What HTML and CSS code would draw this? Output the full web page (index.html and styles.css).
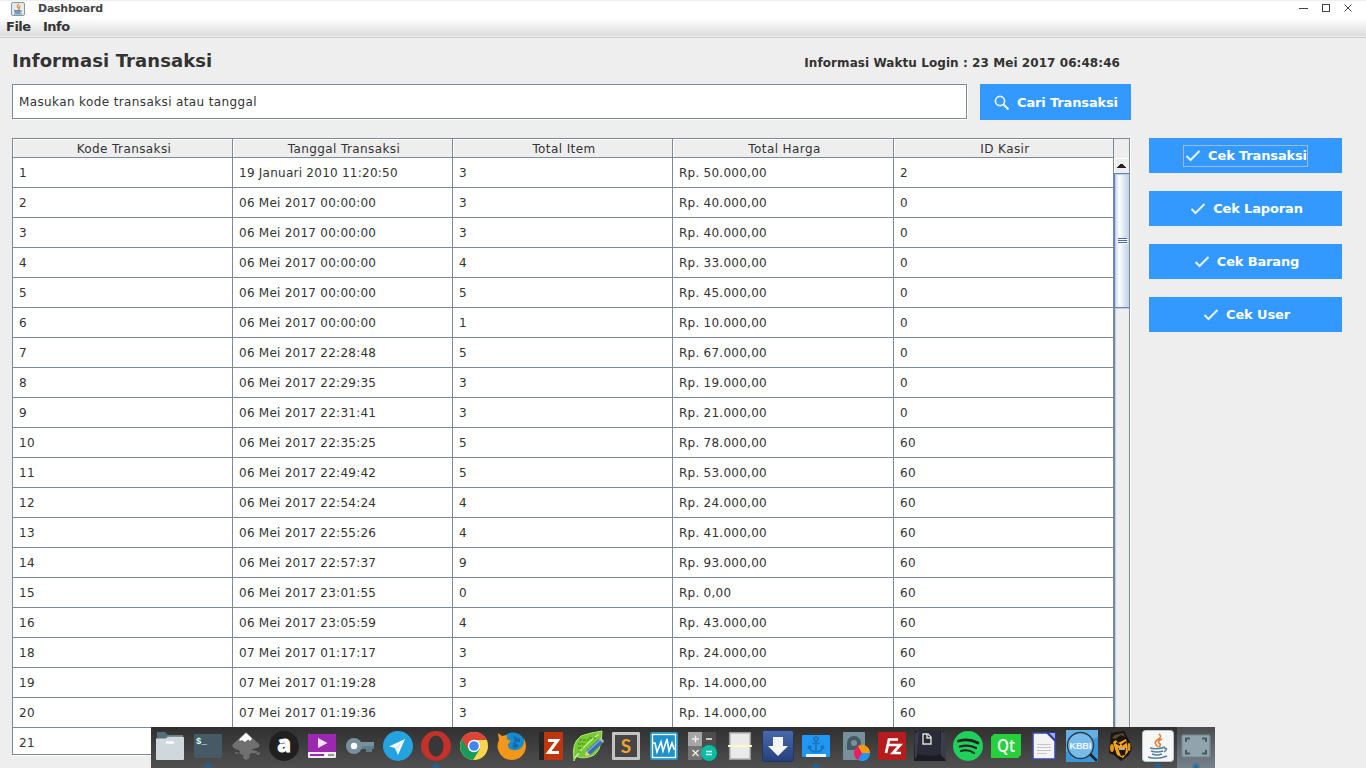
FILE: index.html
```html
<!DOCTYPE html>
<html lang="id">
<head>
<meta charset="utf-8">
<title>Dashboard</title>
<link rel="stylesheet" href="styles.css">
</head>
<body>
<header class="titlebar">
  <svg class="app-icon" width="14" height="14" viewBox="0 0 14 14"><rect x=".5" y=".5" width="13" height="13" rx="1.5" fill="#e4eaee" stroke="#8499a8"/><path d="M8 2Q5 4 7 5.5T7 8M9.500 4Q7.500 5 8.500 7" fill="none" stroke="#ed8b32" stroke-width="1.3"/><path d="M3.500 8.500H9V11H4.500ZM9 9H11M3 12H11" fill="#7aa0b8" stroke="#6489a4"/></svg>
  <span class="window-title">Dashboard</span>
  <svg class="window-controls" width="58" height="14" viewBox="0 0 58 14" fill="none" stroke="#444"><path d="M0 7.500H9"/><rect x="23.500" y="3.500" width="7" height="7"/><path d="M45.500 3.500L52.500 10.500M52.500 3.500L45.500 10.500"/></svg>
</header>
<nav class="menubar"><span class="m-file">File</span><span class="m-info">Info</span></nav>
<main class="content">
  <section class="main-col">
    <div class="heading"><h1>Informasi Transaksi</h1><span class="login">Informasi Waktu Login : 23 Mei 2017 06:48:46</span></div>
    <div class="search">
      <div class="field"><span>Masukan kode transaksi atau tanggal</span></div>
      <div class="btn search-btn"><svg width="16" height="16" viewBox="0 0 16 16" fill="none" stroke="#e9f4ff" stroke-width="1.7"><circle cx="6" cy="6" r="4.6"/><path d="M9.500 9.500L14.500 14.500" stroke-width="2.1"/></svg><span>Cari Transaksi</span></div>
    </div>
    <div class="pane">
      <div class="grid">
        <div class="row head"><span>Kode Transaksi</span><span>Tanggal Transaksi</span><span>Total Item</span><span>Total Harga</span><span>ID Kasir</span></div>
        <div class="row"><span>1</span><span>19 Januari 2010 11:20:50</span><span>3</span><span>Rp. 50.000,00</span><span>2</span></div>
        <div class="row"><span>2</span><span>06 Mei 2017 00:00:00</span><span>3</span><span>Rp. 40.000,00</span><span>0</span></div>
        <div class="row"><span>3</span><span>06 Mei 2017 00:00:00</span><span>3</span><span>Rp. 40.000,00</span><span>0</span></div>
        <div class="row"><span>4</span><span>06 Mei 2017 00:00:00</span><span>4</span><span>Rp. 33.000,00</span><span>0</span></div>
        <div class="row"><span>5</span><span>06 Mei 2017 00:00:00</span><span>5</span><span>Rp. 45.000,00</span><span>0</span></div>
        <div class="row"><span>6</span><span>06 Mei 2017 00:00:00</span><span>1</span><span>Rp. 10.000,00</span><span>0</span></div>
        <div class="row"><span>7</span><span>06 Mei 2017 22:28:48</span><span>5</span><span>Rp. 67.000,00</span><span>0</span></div>
        <div class="row"><span>8</span><span>06 Mei 2017 22:29:35</span><span>3</span><span>Rp. 19.000,00</span><span>0</span></div>
        <div class="row"><span>9</span><span>06 Mei 2017 22:31:41</span><span>3</span><span>Rp. 21.000,00</span><span>0</span></div>
        <div class="row"><span>10</span><span>06 Mei 2017 22:35:25</span><span>5</span><span>Rp. 78.000,00</span><span>60</span></div>
        <div class="row"><span>11</span><span>06 Mei 2017 22:49:42</span><span>5</span><span>Rp. 53.000,00</span><span>60</span></div>
        <div class="row"><span>12</span><span>06 Mei 2017 22:54:24</span><span>4</span><span>Rp. 24.000,00</span><span>60</span></div>
        <div class="row"><span>13</span><span>06 Mei 2017 22:55:26</span><span>4</span><span>Rp. 41.000,00</span><span>60</span></div>
        <div class="row"><span>14</span><span>06 Mei 2017 22:57:37</span><span>9</span><span>Rp. 93.000,00</span><span>60</span></div>
        <div class="row"><span>15</span><span>06 Mei 2017 23:01:55</span><span>0</span><span>Rp. 0,00</span><span>60</span></div>
        <div class="row"><span>16</span><span>06 Mei 2017 23:05:59</span><span>4</span><span>Rp. 43.000,00</span><span>60</span></div>
        <div class="row"><span>18</span><span>07 Mei 2017 01:17:17</span><span>3</span><span>Rp. 24.000,00</span><span>60</span></div>
        <div class="row"><span>19</span><span>07 Mei 2017 01:19:28</span><span>3</span><span>Rp. 14.000,00</span><span>60</span></div>
        <div class="row"><span>20</span><span>07 Mei 2017 01:19:36</span><span>3</span><span>Rp. 14.000,00</span><span>60</span></div>
        <div class="row"><span>21</span><span></span><span></span><span></span><span></span></div>
      </div>
      <div class="scroll">
        <div class="corner"></div>
        <div class="up"><svg width="15" height="14" viewBox="0 0 15 14" shape-rendering="crispEdges"><path d="M2 9V8H3V7H4V6H5V5H8V6H9V7H10V8H11V9Z" fill="#222"/></svg></div>
        <div class="thumb"><i></i><i></i><i></i></div>
        <div class="track"></div>
      </div>
    </div>
  </section>
  <aside class="actions">
    <div class="btn"><div class="label focus"><svg width="16" height="14" viewBox="0 0 16 14"><path d="M1.500 7L5.500 11L14.500 2" fill="none" stroke="#e6f3ff" stroke-width="2"/></svg><span>Cek Transaksi</span></div></div>
    <div class="btn"><div class="label"><svg width="16" height="14" viewBox="0 0 16 14"><path d="M1.500 7L5.500 11L14.500 2" fill="none" stroke="#e6f3ff" stroke-width="2"/></svg><span>Cek Laporan</span></div></div>
    <div class="btn"><div class="label"><svg width="16" height="14" viewBox="0 0 16 14"><path d="M1.500 7L5.500 11L14.500 2" fill="none" stroke="#e6f3ff" stroke-width="2"/></svg><span>Cek Barang</span></div></div>
    <div class="btn"><div class="label"><svg width="16" height="14" viewBox="0 0 16 14"><path d="M1.500 7L5.500 11L14.500 2" fill="none" stroke="#e6f3ff" stroke-width="2"/></svg><span>Cek User</span></div></div>
  </aside>
</main>
<footer class="dock">
  <!-- files -->
  <svg viewBox="0 0 38 41"><path d="M6 5H14L17 8H32V16H6Z" fill="#546e7a"/><path d="M17 8.500H32V12H14Z" fill="#78909c"/><path d="M5 11.500H15L17 10H33V32Q33 33 32 33H6Q5 33 5 32Z" fill="#cfd8dc"/><path d="M15 15.500H23" stroke="#fff" stroke-width="2.4"/></svg>
  <!-- terminal -->
  <svg class="running" viewBox="0 0 38 41"><rect x="5" y="7" width="28" height="24" rx="1" fill="#455a64"/><text x="7" y="17" font-family="Liberation Mono" font-size="9" font-weight="bold" fill="#dff">$_</text></svg>
  <!-- inkscape -->
  <svg viewBox="0 0 38 41"><path d="M19 5L32 17Q34 20 30 21Q24 22 25 23Q29 23 31 25Q28 27 24 26L22 29Q24 31 19 33Q14 31 17 29L12 26Q15 24 9 22Q4 20 6 17Z" fill="#707070"/><path d="M19 6L25 11.500L23 14L21 12.500L18 15L15 13L12.500 14V12Z" fill="#fff"/><path d="M8 25L12 26L9 27ZM28 27L33 25L32 28Z" fill="#777"/></svg>
  <!-- a -->
  <svg viewBox="0 0 38 41"><circle cx="19" cy="19" r="15" fill="#202020"/><text x="19" y="25" text-anchor="middle" font-family="Open Sans" font-size="22" font-weight="800" fill="#fff" stroke="#fff" stroke-width=".8">a</text></svg>
  <!-- video -->
  <svg viewBox="0 0 38 41"><rect x="5" y="7" width="28" height="24" rx="1" fill="#eee"/><path d="M5 8Q5 7 6 7H32Q33 7 33 8V25H5Z" fill="#9c27b0"/><path d="M15 11L24.500 16L15 21Z" fill="#f3e5f5"/><path d="M7 28H22" stroke="#9c27b0" stroke-width="2"/><path d="M25 28H31" stroke="#999" stroke-width="2"/><circle cx="23" cy="28" r="2" fill="#fff"/></svg>
  <!-- key -->
  <svg viewBox="0 0 38 41"><path d="M20 15H33V22H31V25H25V22H20Z" fill="#607d8b"/><path d="M20 15H33V19H20Z" fill="#78909c"/><circle cx="13" cy="19" r="8" fill="#78909c"/><circle cx="13" cy="19" r="3.200" fill="#fff"/></svg>
  <!-- telegram -->
  <svg viewBox="0 0 38 41"><circle cx="19" cy="19" r="15" fill="#25a2e0"/><path d="M26 12L10 19.500L16 21L19 28Z" fill="#fff"/><path d="M26 12L16 21L17 24Z" fill="#d8eaf5"/></svg>
  <!-- opera -->
  <svg class="running" viewBox="0 0 38 41"><circle cx="19" cy="19" r="15" fill="#c4312b"/><ellipse cx="19" cy="19" rx="7.500" ry="10.500" fill="#383838"/></svg>
  <!-- chrome -->
  <svg viewBox="0 0 38 41"><circle cx="19" cy="19" r="14" fill="#ffd54f"/><path d="M19 19L7 12A14 14 0 0 0 18 33L25 22Z" fill="#129d5a"/><path d="M19 19L12.500 22L6.700 12.200A14 14 0 0 1 31.500 13H19Z" fill="#db4437"/><circle cx="19" cy="19" r="6.200" fill="#fff"/><circle cx="19" cy="19" r="4.800" fill="#4285f4"/></svg>
  <!-- firefox -->
  <svg viewBox="0 0 38 41"><circle cx="20" cy="17.500" r="12" fill="#168bd0"/><path d="M5 6L9 9L14 8L14 12L18 14L15 17Q14 22 20 23Q24 24 28 21Q32 17 31 11Q35 20 31 26Q27 33 19 33Q10 33 6 25Q3 19 6 13Z" fill="#f39718"/><path d="M20 9L27 12V15L22 15L26 19L21 22Q18 18 22 14Z" fill="#1369ad"/></svg>
  <!-- zotero -->
  <svg viewBox="0 0 38 41"><rect x="8" y="5" width="24" height="28" rx="1" fill="#252525"/><rect x="13" y="5" width="19" height="28" fill="#bf360c"/><path d="M17 13.500H26.500L17.500 25.500H28" fill="none" stroke="#fff" stroke-width="3"/></svg>
  <!-- leaf editor -->
  <svg viewBox="0 0 38 41"><path d="M5 33Q2 16 12 9Q20 6 33 4Q33 28 20 30Q12 32 7 29L5 34Z" fill="#75c932" stroke="#b5e77b"/><path d="M6 31Q15 18 30 7" fill="none" stroke="#c5f08f" stroke-width="1.500"/><path d="M10 13H20M9 17H17M9 21H14M9 25H12M20 11H28M21 26H23" stroke="#3e8a1c" stroke-width="1.200" stroke-dasharray="3 1"/><path d="M17 24L30 12L34 16L21 28Z" fill="#3c6eb4"/><path d="M18 25L31 13" stroke="#85abe0" stroke-width="1.300"/><path d="M17 24L21 28L16 29Z" fill="#f0c68c"/><path d="M30 12L32 11L35 14L34 16Z" fill="#bbb"/></svg>
  <!-- sublime -->
  <svg viewBox="0 0 38 41"><rect x="5" y="5" width="28" height="28" rx="1" fill="#c4c4c4"/><rect x="8" y="8" width="22" height="22" fill="#464646"/><text x="19" y="26" text-anchor="middle" font-family="Lato" font-size="19" font-weight="bold" fill="#f5a132">S</text></svg>
  <!-- monitor -->
  <svg viewBox="0 0 38 41"><rect x="5" y="5" width="28" height="28" rx="2" fill="#2597cf"/><rect x="7.500" y="7.500" width="23" height="23" fill="#1e92ca" stroke="#fff" stroke-width="1.300"/><path d="M8 16H10L12 25L16 15L18 24L22 12L24 24L27 16L29 22H31" fill="none" stroke="#fff" stroke-width="1.600"/></svg>
  <!-- calculator -->
  <svg viewBox="0 0 38 41"><rect x="5" y="5" width="28" height="28" rx="1" fill="#4d4d4d"/><path d="M5 5H19V19H5Z" fill="#a5a5a5"/><path d="M5 19H19V33H5Z" fill="#747474"/><path d="M9 12H16M12.500 8.500V15.500M23 12H29M9.500 23L15.500 29M15.500 23L9.500 29" stroke="#eee" stroke-width="1.400"/><circle cx="26" cy="26" r="8" fill="#00bfa5"/><path d="M23 24.500H29M23 27.500H29" stroke="#fff" stroke-width="1.300"/></svg>
  <!-- scanner -->
  <svg viewBox="0 0 38 41"><rect x="8.700" y="5.700" width="20.600" height="26.600" fill="#eaeaea" stroke="#999" stroke-width="1.500"/><path d="M7 19H31" stroke="#fff9c4" stroke-width="2"/></svg>
  <!-- download -->
  <svg viewBox="0 0 38 41"><defs><linearGradient id="blue" x2="0" y2="1"><stop stop-color="#4a69aa"/><stop offset="1" stop-color="#27407c"/></linearGradient></defs><rect x="3.500" y="3.500" width="31" height="31" rx="2" fill="url(#blue)" stroke="#203869"/><path d="M14 10H24V19H29L19 29L9 19H14Z" fill="#f5f5f5"/></svg>
  <!-- anchor dock -->
  <svg class="running" viewBox="0 0 38 41"><rect x="5" y="8" width="28" height="22" rx="1" fill="#2196f3"/><path d="M9 28.500H29" stroke="#e8f4ff" stroke-width="3"/><g fill="none" stroke="#1976ba" stroke-width="1.700"><circle cx="19" cy="12" r="2"/><path d="M19 14V25M15 16.500H23M12 19Q13 25 19 25T26 19M11 22L12 19L15 20M23 20L26 19L27 22"/></g></svg>
  <!-- disk color -->
  <svg viewBox="0 0 38 41"><rect x="8" y="5" width="22" height="28" rx="1" fill="#78909c"/><circle cx="19" cy="16" r="7" fill="#455a64"/><path d="M12 16V23H19Z" fill="#455a64"/><circle cx="19" cy="16" r="3" fill="#78909c"/><path d="M27 26L19 26A8 8 0 0 1 23 19Z" fill="#e91e63"/><path d="M27 26L23 19A8 8 0 0 1 35 26Z" fill="#ff9800"/><path d="M27 26H35A8 8 0 0 1 23 33Z" fill="#2196f3"/><path d="M27 26H19A8 8 0 0 0 23 33Z" fill="#e91e63"/></svg>
  <!-- filezilla -->
  <svg viewBox="0 0 38 41"><rect x="5" y="5" width="28" height="28" rx="1" fill="#b71c1c"/><path d="M13 26L16 12.500H25M14 18H22M19 18H27L20 26H28" fill="none" stroke="#fff" stroke-width="2.700"/></svg>
  <!-- keycap -->
  <svg viewBox="0 0 38 41"><path d="M4 4H33L35 34H3Z" fill="#1b1c23"/><path d="M8 3H29L31 27Q19 30 6 27Z" fill="#292b36"/><path d="M4 6L8 4L6 28L4 33ZM30 4L34 6L35 33L30 28Z" fill="#3a3d4c"/><path d="M12 7H17L20 10V17H12ZM16 7V11H20" fill="none" stroke="#ddd" stroke-width="1.400"/></svg>
  <!-- spotify -->
  <svg viewBox="0 0 38 41"><circle cx="19" cy="19" r="15" fill="#1fd05b"/><g fill="none" stroke="#222" stroke-linecap="round"><path d="M9.500 14Q20 11 29 16" stroke-width="2.800"/><path d="M11 19.500Q20 17 27 21" stroke-width="2.300"/><path d="M12 24Q19 22 25 26" stroke-width="2"/></g></svg>
  <!-- qt -->
  <svg viewBox="0 0 38 41"><path d="M7 7H34V28L31 31H4V10Z" fill="#26cf3c"/><text x="19" y="25" text-anchor="middle" textLength="18" lengthAdjust="spacingAndGlyphs" font-family="Open Sans" font-size="18" font-weight="600" fill="#fff">Qt</text></svg>
  <!-- writer -->
  <svg viewBox="0 0 38 41"><path d="M8 6H22L30 14V32H8Z" fill="#f3f3f3" stroke="#3949ab" stroke-width="1.500"/><path d="M21 5H31V15Z" fill="#2737a0"/><path d="M24 6L30 12V6Z" fill="#9fa8da"/><path d="M12 17.500H26M12 20.500H26M12 23.500H26M12 26.500H22" stroke="#c5c5c5"/></svg>
  <!-- kbbi -->
  <svg viewBox="0 0 38 41"><path d="M3 3H35V35H3Z" fill="#65afe2"/><path d="M3 25L35 10V35H3Z" fill="#3c99d9"/><circle cx="17.500" cy="18.500" r="13" fill="#79bbea" stroke="#263e51" stroke-width="1.400"/><path d="M27 27L34 34" stroke="#202020" stroke-width="2.500"/><text x="17.500" y="22" text-anchor="middle" textLength="22" lengthAdjust="spacingAndGlyphs" font-family="Liberation Sans" font-size="9.500" fill="#fff" stroke="#fff" stroke-width=".2">KBBI</text></svg>
  <!-- shouting mascot -->
  <svg viewBox="0 0 38 41"><path d="M9 17L10 6L23 4L28 13L31 21L28 28L20 34L13 28L8 26Z" fill="#191510"/><path d="M11 11L14 8L22 6L24 10L20 8L14 12Z" fill="#5b4a33"/><path d="M12 15L15 13L17 16L25 12L26 18L27 25L22 31L16 28L14 22Z" fill="#f4a517"/><ellipse cx="11" cy="21" rx="2" ry="4" fill="#e59413"/><ellipse cx="28" cy="20" rx="1.500" ry="4" fill="#e59413"/><path d="M15 16L19 18M25 15L21 18" stroke="#181210" stroke-width="1.600"/><path d="M17 21H25L24 28L20 29Z" fill="#201510"/><path d="M18 22H24" stroke="#fff" stroke-width="1.300"/></svg>
  <!-- java -->
  <svg class="running" viewBox="0 0 38 41"><rect x="3.500" y="3.500" width="31" height="31" rx="3" fill="#f7f7f7" stroke="#b9c5cc"/><path d="M20 7Q24 10 18 13Q14 16 19 20M23 12Q17 14 21 17Q22 18 20 20" fill="none" stroke="#e77932" stroke-width="1.600"/><path d="M11 21Q18 23 26 20M12 24Q18 26 24 24M13 27Q18 29 23 27M25 21Q30 21 25 25M9 30Q18 33 28 29" fill="none" stroke="#557f9b" stroke-width="1.600"/></svg>
  <!-- screenshot -->
  <svg class="running active" viewBox="0 0 38 41"><rect x="5" y="8" width="28" height="22" rx="1" fill="#90a4ae" stroke="#748791"/><path d="M9 15V11.500H13M25 11.500H29V15M29 23V26.500H25M13 26.500H9V23" fill="none" stroke="#455a64" stroke-width="2"/></svg>
</footer>
</body>
</html>
```
FILE: styles.css
```css
* { box-sizing: border-box; }
body { margin: 0; width: 1366px; height: 768px; overflow: hidden; position: relative; background: #eee; color: #333; font: 12px/16px "DejaVu Sans", sans-serif; display: flex; flex-direction: column; }
.titlebar { height: 18px; flex: none; border-top: 1px solid #eee; background: #fff; display: flex; align-items: center; padding: 0 9px 0 11px; }
.app-icon { margin-top: -1px; }
.window-title { font-size: 11px; font-weight: bold; color: #444; margin: -1px auto 0 13px; letter-spacing: -.25px; }
.window-controls { margin-top: -3px; }
.menubar { height: 20px; flex: none; display: flex; padding-left: 6px; font-weight: bold; font-size: 13px; line-height: 18px; background: linear-gradient(#fff, #dadada); border-bottom: 1px solid #ccc; box-shadow: inset 0 -1px #eee; }
.m-file { width: 37px; letter-spacing: -.5px; }
.m-info { letter-spacing: -.5px; }
.content { display: flex; gap: 18px; padding-left: 12px; flex: 1; min-height: 0; }
.main-col { width: 1119px; }
.heading { height: 46px; display: flex; justify-content: space-between; padding: 11px 11px 0 0; }
h1 { margin: 0; font-size: 18px; line-height: 23px; letter-spacing: .1px; }
.login { font-weight: bold; font-size: 12px; line-height: 28px; letter-spacing: .07px; }
.search { display: flex; gap: 13px; height: 36px; }
.field { width: 955px; height: 35px; background: #fff; border: 1px solid #7a8a99; box-shadow: 1px 1px #fff; padding: 9px 6px; }
.field span { letter-spacing: .38px; }
.btn { background: #39f; color: #fff; font-weight: bold; font-size: 13px; letter-spacing: -.15px; display: flex; align-items: center; justify-content: center; }
.search-btn { width: 151px; gap: 7px; padding: 2px 0 0 1px; }
.pane { width: 1118px; height: 617px; margin-top: 18px; display: flex; overflow: hidden; border: 1px solid #7a8a99; background: #fff; box-shadow: 1px 1px #fff; }
.grid { width: 1101px; flex: none; }
.row { display: grid; grid-template: 30px / 220px 220px 220px 221px 220px; line-height: 30px; }
.row span { border: solid #7a8a99; border-width: 0 1px 1px 0; padding-left: 6px; letter-spacing: .25px; white-space: nowrap; }
.row.head { grid-template-rows: 19px; line-height: 20px; }
.row.head span { background: #eee; box-shadow: inset 1px 1px #fff; padding-left: 3px; text-align: center; letter-spacing: .4px; }
.scroll { flex: 1; display: flex; flex-direction: column; background: #eee; }
.corner { height: 19px; }
.up { height: 15px; border: solid #fff; border-width: 1px 0 0 1px; background: #eee; }
.up svg { display: block; }
.thumb { height: 135px; flex: none; border: 1px solid #6382bf; border-right: 0; box-shadow: inset 1px 1px #b8cfe5; background: linear-gradient(90deg, #c8d9ea, #fff 30%, #dce7f2 60%, #b8cfe5); display: flex; flex-direction: column; align-items: center; justify-content: center; gap: 1px; }
.thumb i { width: 9px; height: 1px; background: #4769b5; box-shadow: 1px 1px #fff; }
.track { flex: 1; border-left: 1px solid #7a8a99; box-shadow: inset 1px 1px #b8cfe5; }
.actions { width: 193px; padding-top: 100px; display: flex; flex-direction: column; gap: 18px; }
.actions .btn { height: 35px; }
.label { display: flex; align-items: center; gap: 7px; height: 22px; padding: 0 0 0 2px; white-space: nowrap; }
.label.focus { border: 1px solid #a3b8cc; padding-left: 1px; }
.dock { position: absolute; left: 151px; top: 727px; display: flex; width: 1064px; height: 41px; background: linear-gradient(#303030, #505050); }
.dock svg { width: 38px; height: 41px; flex: none; }
.running { background: radial-gradient(circle at 19px 40px, #1467aa 0, #1467aa99 2px, transparent 5px); }
.active { background: radial-gradient(circle at 19px 40px, #1467aa 0, #1467aa99 2px, transparent 5px), linear-gradient(#4a4d4f, #76838a); }
```
